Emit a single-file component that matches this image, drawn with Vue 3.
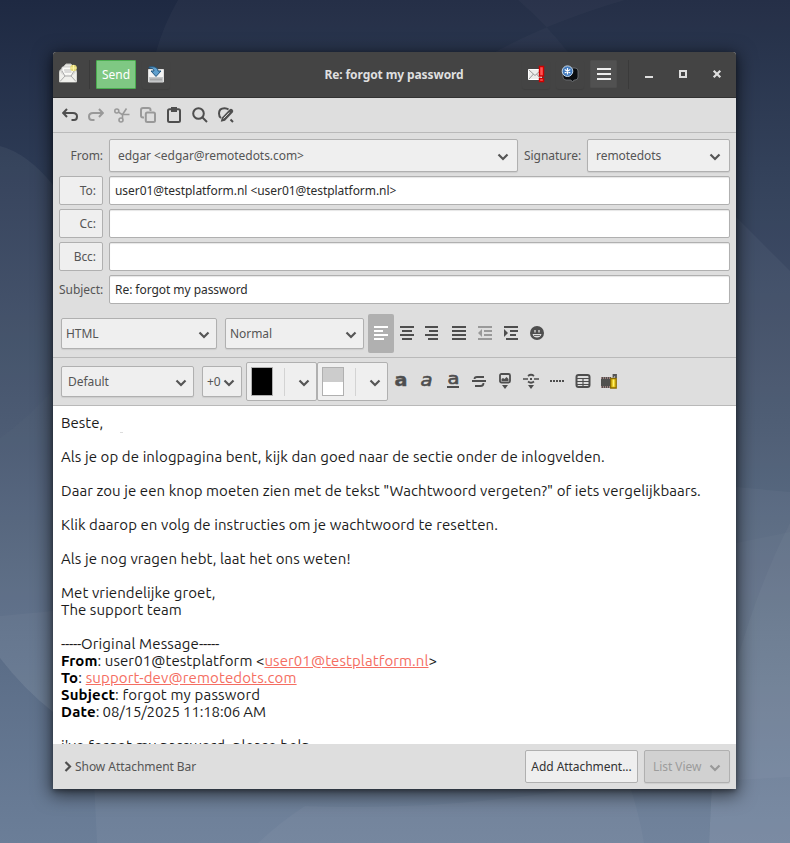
<script setup>
const recipients = [
  { label: 'To:', value: 'user01@testplatform.nl <user01@testplatform.nl>' },
  { label: 'Cc:', value: '' },
  { label: 'Bcc:', value: '' },
]
</script>

<template>
  <div class="desktop">
    <svg class="wallpaper" viewBox="0 0 790 843" preserveAspectRatio="none">
      <defs>
        <linearGradient id="sky" x1="0" y1="0" x2="0" y2="1">
          <stop offset="0" stop-color="#1e2942" />
          <stop offset=".2" stop-color="#2d3b55" />
          <stop offset=".5" stop-color="#43536c" />
          <stop offset=".75" stop-color="#596b85" />
          <stop offset="1" stop-color="#6b7e98" />
        </linearGradient>
      </defs>
      <rect width="790" height="843" fill="url(#sky)" />
      <g fill="#fff">
        <path d="M178 0Q164 24 156 52V100H712V780L709 843H790V0Z" fill-opacity=".032" />
        <path d="M625 0Q550 22 495 52H568Q546 24 518 0Z" fill-opacity=".022" />
        <path d="M0 146Q27 153 53 185V390Q28 418 0 438Z" fill-opacity=".05" />
        <path d="M0 438Q28 418 53 390V712Q23 688 0 658Z" fill-opacity=".06" />
        <path d="M0 616L53 611V712Q23 688 0 658Z" fill-opacity=".03" />
        <path d="M712 195L736 217 790 271V843H709L712 780Z" fill-opacity=".04" />
        <path d="M712 485L736 487 790 492V843H709L712 780Z" fill-opacity=".03" />
        <path d="M712 548L736 543 790 532V843H709L712 780Z" fill-opacity=".025" />
        <path d="M736 664Q758 586 790 523V777L736 780Z" fill-opacity=".03" />
        <path d="M94 780L97 843H709L712 780Z" fill-opacity=".045" />
        <path d="M258 843Q280 822 305 806Q470 812 620 780H628Q640 816 644 843Z" fill-opacity=".035" />
      </g>
    </svg>

    <main class="window">
      <header class="titlebar">
        <svg class="app-icon" width="20" height="22" viewBox="0 0 20 22">
          <path d="M1.500 9L8 2h5l5.500 7v11h-17z" fill="#e6e6e2" stroke="#bdbdb9" />
          <path d="M4 5h12v7l-6 4-6-4z" fill="#fafaf7" stroke="#bbb" stroke-width=".7" />
          <path d="M1.500 10l5 4 3.500-2 3.500 2 5-4v10h-17z" fill="#f0f0ec" />
          <path d="M2 19.500l5-5.500h6l5 5.500M4 9l3 5M16 9l-3 5" stroke="#aaa" fill="none" />
          <path d="M6 8h7M6.500 10h7" stroke="#bbb" />
          <circle cx="15.500" cy="6" r="3.300" fill="#e3d878" />
          <path d="M15.500 3v6M12.500 6h6" stroke="#fff5a5" />
        </svg>
        <span class="rule"></span>
        <button class="send">Send</button>
        <span class="header-icon save">
          <svg width="16" height="17" viewBox="0 0 16 17">
            <path d="M.5 3.500h15V16H.500z" fill="#f4f4f4" stroke="#dedede" />
            <path d="M1 11h14v5H1z" fill="#c6c8ca" />
            <path d="M2.500 13.500h11" stroke="#888" stroke-dasharray="1 1" stroke-width="2" />
            <path d="M1 1c6-1 9 1 9 4h3L8 10.500 3 5h3C6 3 4 2 1 2z" fill="#5f9fcd" stroke="#23567f" />
          </svg>
        </span>
        <h1>Re: forgot my password</h1>
        <span class="header-icon important">
          <svg width="18" height="18" viewBox="0 0 18 18">
            <path d="M1.500 4.500h13v10h-13z" fill="#eeeeec" stroke="#fff" />
            <path d="M2 5l6 5.500L14 5M2 14l4.500-5M14 14l-4.500-5" fill="none" stroke="#999" />
            <path d="M12.500 1.500h4v9.500h-4zM12.500 13.500h4v3h-4z" fill="#ff5353" stroke="#cf0000" stroke-width="1.400" />
          </svg>
        </span>
        <span class="header-icon security">
          <svg width="18" height="18" viewBox="0 0 18 18">
            <path d="M4 3h10q3 0 3 3v6q0 3-3 3h-1l-1.500 2L10 15H5q-3-.500-3-3V6z" fill="#0b0d10" stroke="#73777b" stroke-width=".8" />
            <circle cx="6.500" cy="6.200" r="5.300" fill="#4179bc" stroke="#c6daec" />
            <path d="M6.500 3v6.500M3.700 4.600l5.600 3.300M9.300 4.600L3.700 7.900" stroke="#fff" stroke-width="1.200" />
          </svg>
        </span>
        <button class="menu"><i></i><i></i><i></i></button>
        <span class="rule second"></span>
        <svg class="controls" width="78" height="12" viewBox="0 0 78 12" fill="none" stroke="#dedede" stroke-width="2">
          <path d="M0 9h8" />
          <path d="M35 3h6v6h-6z" />
          <path d="M68.700 2.700l6.600 6.600M75.300 2.700l-6.600 6.600" stroke-width="2.200" />
        </svg>
      </header>

      <nav class="toolbar">
        <svg viewBox="0 0 16 16"><path d="M5 2L1.200 6 5 10M2 6h9Q15 6 15 9.500T12 13H9.500" /></svg>
        <svg class="off" viewBox="0 0 16 16"><path d="M11 2l3.800 4L11 10M14 6H5Q1 6 1 9.500T4 13h2.500" /></svg>
        <svg class="off thin" viewBox="0 0 16 16"><circle cx="2.800" cy="4" r="2" /><circle cx="7" cy="13" r="2" /><path d="M4.500 5.200L8 7.500h7.500M8.500 11.300V7.500L12.500 1.500" /></svg>
        <svg class="off" viewBox="0 0 16 16"><path d="M4 10.500H3Q1 10.500 1 8.500V3Q1 1 3 1h5.500q2 0 2 2v1" /><rect x="5.800" y="5.500" width="9.200" height="9.500" rx="1.500" /></svg>
        <svg viewBox="0 0 16 16"><rect x="2" y="2.300" width="12" height="12.700" rx="1.500" /><path d="M5 0h6v5H5z" fill="#4e4e4e" stroke="none" /></svg>
        <svg viewBox="0 0 16 16"><circle cx="6.500" cy="6.500" r="5.300" /><path d="M10.500 10.500L15 15" /></svg>
        <svg viewBox="0 0 16 16"><path d="M3 11Q1 9.500 1 6.500 1 1.200 6.500 1.200q2.500 0 4 1.300M12.500 12.500L15 15" /><path d="M2.800 14.800l.9-4L11.500 2.500q1.500-1.300 3 .1t.2 3L7 13.800z" fill="#4e4e4e" stroke="none" /><path d="M5.500 11.500l5.800-6" stroke="#dedede" stroke-width="1" /></svg>
      </nav>

      <section class="envelope">
        <div class="field sender">
          <label>From:</label>
          <button class="select large"><span>edgar &lt;edgar@remotedots.com&gt;</span><svg class="chevron" viewBox="0 0 12 8"><path d="M1.500 1.500L6 6l4.500-4.500" /></svg></button>
          <label class="signature">Signature:</label>
          <button class="select large sign"><span>remotedots</span><svg class="chevron" viewBox="0 0 12 8"><path d="M1.500 1.500L6 6l4.500-4.500" /></svg></button>
        </div>
        <div v-for="row in recipients" :key="row.label" class="field">
          <button class="recipient">{{ row.label }}</button>
          <div class="input">{{ row.value }}</div>
        </div>
        <div class="field">
          <label>Subject:</label>
          <div class="input">Re: forgot my password</div>
        </div>
      </section>

      <section class="format first">
        <button class="select mode"><span>HTML</span><svg class="chevron" viewBox="0 0 12 8"><path d="M1.500 1.500L6 6l4.500-4.500" /></svg></button>
        <button class="select style"><span>Normal</span><svg class="chevron" viewBox="0 0 12 8"><path d="M1.500 1.500L6 6l4.500-4.500" /></svg></button>
        <div class="tools">
          <span class="tool active"><svg viewBox="0 0 16 16"><path d="M1 2h14M1 6h9M1 10h14M1 14h10" /></svg></span>
          <span class="tool"><svg viewBox="0 0 16 16"><path d="M1 2h14M3 6h10M1 10h14M3 14h10" /></svg></span>
          <span class="tool"><svg viewBox="0 0 16 16"><path d="M0 2h13M4 6h9M0 10h13M3 14h10" /></svg></span>
          <span class="tool"><svg viewBox="0 0 16 16"><path d="M1 2h14M1 6h14M1 10h14M1 14h14" /></svg></span>
          <span class="tool off"><svg viewBox="0 0 16 16"><path d="M1 2h14M7 6h8M7 10h8M1 14h14" /><path d="M5 4v8L1 8z" fill="#999" stroke="none" /></svg></span>
          <span class="tool"><svg viewBox="0 0 16 16"><path d="M1 2h14M7 6h8M7 10h6M3 14h12" /><path d="M1 4v8l4-4z" fill="#4e4e4e" stroke="none" /></svg></span>
          <span class="tool"><svg viewBox="0 0 16 16"><circle cx="8" cy="8" r="7" fill="#4e4e4e" stroke="none" /><path d="M6 5v2.500M10 5v2.500" stroke="#dedede" stroke-width="1.300" /><path d="M3.500 9h9q-1 3.500-4.500 3.500T3.500 9z" fill="#dedede" stroke="none" /><path d="M5 10.500h6" stroke="#4e4e4e" stroke-width=".8" /></svg></span>
        </div>
      </section>

      <section class="format second-row">
        <button class="select font"><span>Default</span><svg class="chevron" viewBox="0 0 12 8"><path d="M1.500 1.500L6 6l4.500-4.500" /></svg></button>
        <button class="select size"><span>+0</span><svg class="chevron" viewBox="0 0 12 8"><path d="M1.500 1.500L6 6l4.500-4.500" /></svg></button>
        <div class="colors">
          <button class="color"><span class="swatch black"></span><i></i><svg class="chevron" viewBox="0 0 12 8"><path d="M1.500 1.500L6 6l4.500-4.500" /></svg></button>
          <button class="color"><span class="swatch split"></span><i></i><svg class="chevron" viewBox="0 0 12 8"><path d="M1.500 1.500L6 6l4.500-4.500" /></svg></button>
        </div>
        <div class="tools lower">
          <span class="tool"><svg viewBox="0 0 16 16"><text x="1.500" y="13.300" font-size="18" class="heavy" textLength="13" lengthAdjust="spacingAndGlyphs">a</text></svg></span>
          <span class="tool"><svg viewBox="0 0 16 16"><text x="1.500" y="13.300" font-size="17.500" font-style="italic" class="medium" textLength="12" lengthAdjust="spacingAndGlyphs">a</text></svg></span>
          <span class="tool"><svg viewBox="0 0 16 16"><text x="2.500" y="11" font-size="15.500" class="medium" textLength="12" lengthAdjust="spacingAndGlyphs">a</text><path d="M2 14h12" /></svg></span>
          <span class="tool"><svg viewBox="0 0 16 16"><path d="M13 4H6Q3.500 4 3.500 6M1 8h14M12.500 10q0 3-3 3H4" stroke-width="1.800" /></svg></span>
          <span class="tool"><svg viewBox="0 0 16 16"><rect x="3" y="1" width="10" height="8.500" rx="1.500" stroke-width="1.800" /><path d="M4.500 8V6L6 5l1.500 1 2-2L11.500 6v2zM5 12h6l-3 4z" fill="#4e4e4e" stroke="none" /></svg></span>
          <span class="tool"><svg viewBox="0 0 16 16"><path d="M0 6h5M11 6h5M5 3q3-2.500 6 0M5 8.500q3 2.500 6 0" stroke-width="1.700" /><path d="M7 5h2v2H7zM5 12h6l-3 4z" fill="#4e4e4e" stroke="none" /></svg></span>
          <span class="tool"><svg viewBox="0 0 16 16"><path d="M1 8h14" stroke-dasharray="2 1" /></svg></span>
          <span class="tool"><svg viewBox="0 0 16 16"><rect x="1.500" y="2" width="13" height="12" rx="2" /><path d="M2 5.500h12M2 8.500h12M2 11.500h12M8 5v9" stroke-width="1.100" /></svg></span>
          <span class="tool"><svg viewBox="0 0 16 16"><path d="M0 4h10v11H0z" fill="#50504e" stroke="none" /><path d="M0 5h10M0 14h10" stroke="#e5adad" stroke-width="1.200" stroke-dasharray="1 1" /><path d="M9.700 5.500h5.500v9.500h-5.500z" fill="#e7c51b" stroke="#8c6c00" stroke-width="1.300" /><path d="M12.500 6.500v7" stroke="#fff16b" stroke-width="1.400" /><path d="M12.500 4.500V2h2.500v3" stroke="#555" stroke-width="1.800" /></svg></span>
        </div>
      </section>

      <article class="message">
        <p class="l1">Beste, <i class="speck"></i></p><br>
        <p class="l2">Als je op de inlogpagina bent, kijk dan goed naar de sectie onder de inlogvelden.</p><br>
        <p class="l3">Daar zou je een knop moeten zien met de tekst "Wachtwoord vergeten?" of iets vergelijkbaars.</p><br>
        <p class="l4">Klik daarop en volg de instructies om je wachtwoord te resetten.</p><br>
        <p class="l5">Als je nog vragen hebt, laat het ons weten!</p><br>
        <p class="l6">Met vriendelijke groet,</p>
        <p class="l7">The support team</p><br>
        <p class="l8">-----<span>Original Message</span>-----</p>
        <p class="l9"><b>From</b>: user01@testplatform &lt;<a>user01@testplatform.nl</a>&gt;</p>
        <p class="l10"><b>To</b>: <a>support-dev@remotedots.com</a></p>
        <p class="l11"><b>Subject</b>: forgot my password</p>
        <p class="l12"><b>Date</b>: 08/15/2025 11:18:06 AM</p><br>
        <p class="l13">i've forgot my password, please help</p>
      </article>

      <footer class="attachments">
        <svg class="expander" width="9" height="12" viewBox="0 0 9 12"><path d="M1.500 1L6 5.500 1.500 10" /></svg>
        <span class="show">Show Attachment Bar</span>
        <button class="add">Add Attachment...</button>
        <button class="select view"><span>List View</span><svg class="chevron" viewBox="0 0 12 8"><path d="M1.500 1.500L6 6l4.500-4.500" /></svg></button>
      </footer>
    </main>
  </div>
</template>

<style>
body { margin: 0; overflow: hidden; }
</style>

<style scoped>
* { box-sizing: border-box; }
.desktop { position: relative; width: 790px; height: 843px; padding: 52px 54px 54px 53px; font-family: "Noto Sans", sans-serif; font-size: 12px; letter-spacing: -.05px; color: #555; overflow: hidden; }
.wallpaper { position: absolute; inset: 0; width: 100%; height: 100%; }
.window { position: relative; display: flex; flex-direction: column; width: 683px; height: 737px; background: #dedede; border-radius: 3px 3px 0 0; box-shadow: 0 4px 18px 2px rgba(0, 0, 0, .58), 0 2px 5px rgba(0, 0, 0, .35); }
button { font: inherit; letter-spacing: inherit; color: inherit; margin: 0; padding: 0; border: 1px solid #b0b0b0; border-radius: 2px; background: #efefef; white-space: nowrap; }
svg { flex: none; }

.titlebar { display: flex; align-items: center; height: 46px; padding: 0 14px 1px 5px; background: #444; border-bottom: 1px solid #323232; border-radius: 3px 3px 0 0; }
.app-icon { margin-top: -2px; }
.rule { width: 1px; height: 29px; margin: 0 6px 0 11px; background: #3a3a3a; }
.send { width: 40px; height: 29px; border-color: #4bae50; border-radius: 1px; background: #7fc883; color: #fff; }
.header-icon { display: grid; place-items: center; width: 28px; height: 29px; border-radius: 3px; box-shadow: 0 1px 1px rgba(0, 0, 0, .08); }
.save { margin-left: 6px; }
h1 { flex: 1; margin: 0 0 0 96px; padding-top: 1px; text-align: center; font-size: 12px; line-height: 18px; font-weight: 700; letter-spacing: -.1px; color: #dfdfdf; white-space: nowrap; }
.security { margin-left: 6px; }
.menu { display: flex; flex-direction: column; align-items: center; justify-content: center; gap: 3px; width: 27px; height: 28px; margin-left: 6px; border-color: #4d4d4d; background: #515151; border-radius: 1px; }
.menu i { width: 14px; height: 2px; background: #eee; }
.second { margin: 0 16px 0 11px; }
.controls { margin-right: -1px; }

.toolbar { display: flex; align-items: center; gap: 10px; height: 35px; padding: 0 9px; border-bottom: 1px solid #b9b9b9; }
.toolbar svg { width: 16px; height: 16px; fill: none; stroke: #4e4e4e; stroke-width: 2; }
.toolbar .off { stroke: #999; }
.toolbar .thin { stroke-width: 1.6; }

.envelope { display: flex; flex-direction: column; gap: 4px; padding: 6px; }
.field { display: grid; grid-template-columns: 44px 1fr; column-gap: 6px; align-items: center; height: 29px; }
.field label { text-align: right; white-space: nowrap; }
.sender { grid-template-columns: 44px 409px 57px 143px; height: 33px; }
.recipient { height: 29px; padding-right: 6px; text-align: right; }
.input { display: flex; align-items: center; height: 29px; padding: 0 5px; border: 1px solid #b0b0b0; border-radius: 2px; background: #fff; box-shadow: inset 0 1px 1px #e6e6e6; color: #2c2c2c; }
.select { display: flex; align-items: center; justify-content: space-between; height: 31px; padding: 0 6px 0 4px; box-shadow: 0 1px 1px rgba(0, 0, 0, .08); }
.large { height: 33px; padding: 0 8px; }
.chevron { width: 12px; height: 8px; margin-top: 2px; fill: none; stroke: #555; stroke-width: 2.200; }

.format { display: flex; align-items: center; padding-left: 8px; border-bottom: 1px solid #b9b9b9; }
.first { height: 48px; gap: 8px; }
.mode { width: 156px; }
.style { width: 139px; }
.tools { display: flex; }
.first .tools { margin-left: -4px; }
.tool { display: grid; place-items: center; width: 26px; height: 39px; padding-bottom: 1px; border-radius: 2px; }
.tool svg { width: 16px; height: 16px; fill: none; stroke: #4e4e4e; stroke-width: 2; overflow: visible; }
.tool.active { background: #b0b0b0; }
.tool.active svg { stroke: #fff; }
.tool.off svg { stroke: #999; }
.tool text { fill: #4e4e4e; font-family: "DejaVu Sans", sans-serif; letter-spacing: 0; }
.tool text.heavy { font-weight: 700; stroke: #4e4e4e; stroke-width: .4; }
.tool text.medium { font-weight: 400; stroke: #4e4e4e; stroke-width: .6; }
.second-row { height: 48px; }
.font { width: 133px; padding-left: 6px; }
.size { width: 40px; margin-left: 8px; padding: 0 6px 0 4px; }
.colors { display: flex; margin-left: 4px; }
.color { display: flex; align-items: center; width: 71px; height: 39px; padding: 0 6px 0 4px; }
.swatch { width: 22px; height: 29px; border: 1px solid #b0b0b0; }
.black { background: #000; }
.split { background: linear-gradient(#ccc 50%, #fff 50%); }
.color i { width: 1px; height: 28px; margin: 0 13px 0 11px; background: #d3d3d3; }
.color .chevron { flex: none; }

.message { height: 338px; padding: 8px 8px 0; background: #fff; overflow: hidden; font-size: 15px; line-height: 17px; letter-spacing: 0; color: #1c1c1c; font-family: Ubuntu, "Noto Sans", sans-serif; }
.message p { height: 17px; margin: 0; white-space: nowrap; width: max-content; }
.message a { color: #f56e62; text-decoration: underline; }
.message b { color: #000; }
.message .l2, .message .l5 { letter-spacing: .09px; }
.message .l3 { letter-spacing: .066px; }
.message .l4 { letter-spacing: .078px; }
.message .l6, .message .l9 { letter-spacing: .08px; }
.message .l7 { letter-spacing: .06px; }
.message .l8 { letter-spacing: -.35px; }
.message .l8 span { letter-spacing: .14px; }
.message .l10, .message .l13 { letter-spacing: .13px; }
.message .l11 { letter-spacing: .16px; }
.message .l12 { letter-spacing: -.15px; }
.message .l12 b { letter-spacing: .2px; }
.speck { display: inline-block; width: 3px; height: 1px; margin-left: 13px; vertical-align: -5px; background: #ddd; }

.attachments { display: flex; align-items: center; height: 45px; padding: 0 6px 0 11px; }
.expander { fill: none; stroke: #4e4e4e; stroke-width: 2.200; }
.show { margin-left: 2px; }
.add { width: 113px; height: 33px; margin-left: auto; color: #333; }
.view { width: 86px; height: 33px; margin-left: 6px; padding: 0 8px; background: #d1d1d1; color: #9c9c9c; }
.view .chevron { stroke: #999; }
</style>
